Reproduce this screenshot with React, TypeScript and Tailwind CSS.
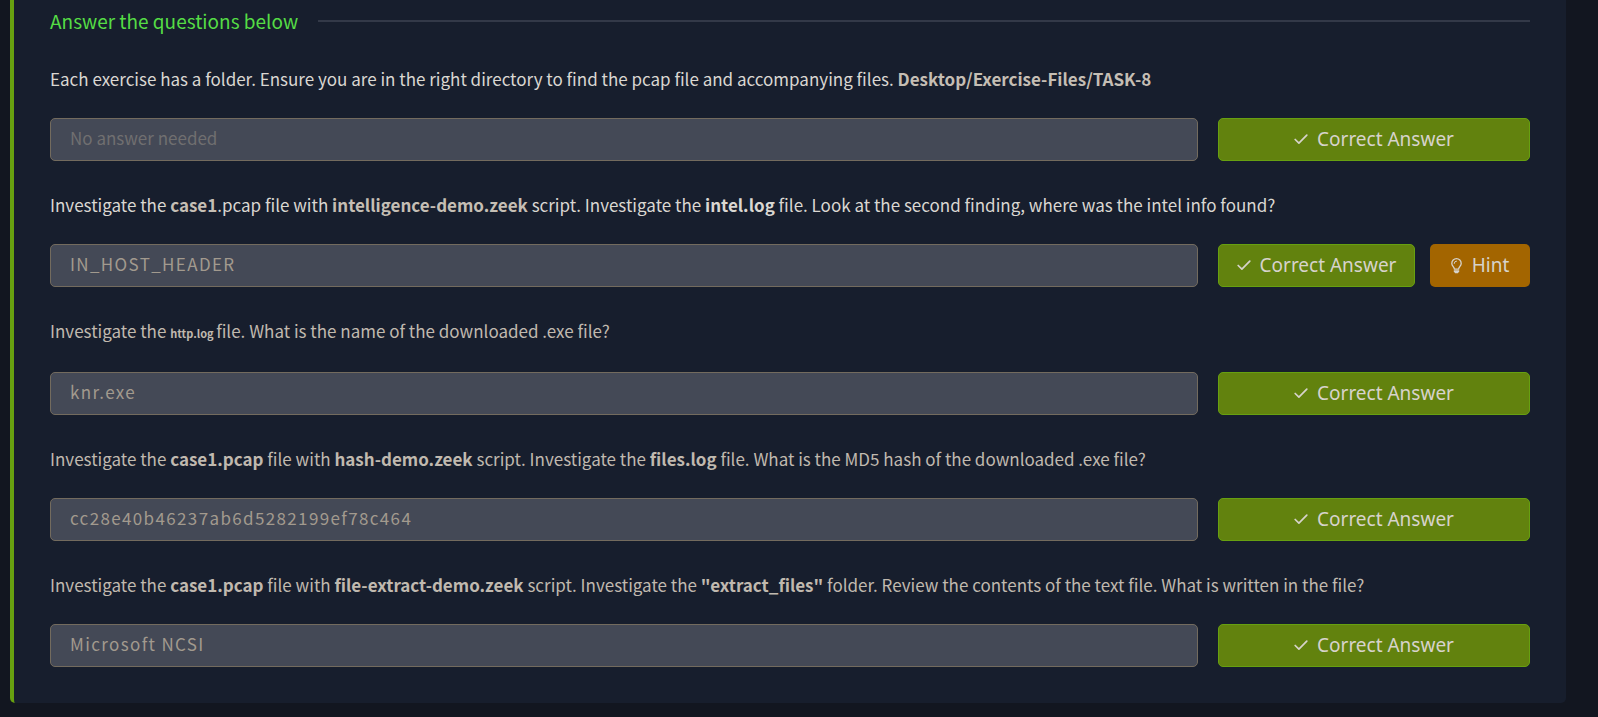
import { useId, type ReactNode } from "react";

type Question = {
  text: ReactNode;
  answer?: string;
  bright?: boolean;
  hint?: boolean;
};

const questions: Question[] = [
  {
    text: (
      <>
        Each exercise has a folder. Ensure you are in the right directory to find the pcap file and
        accompanying files. <b className="text-[#c5beb4]">Desktop/Exercise-Files/TASK-8</b>
      </>
    ),
    bright: true,
  },
  {
    text: (
      <>
        Investigate the <b className="text-[#c5beb4]">case1</b>.pcap file with{" "}
        <b className="text-[#c5beb4]">intelligence-demo.zeek</b> script. Investigate the{" "}
        <b>intel.log</b> file. Look at the second finding, where was the intel info found?
      </>
    ),
    answer: "IN_HOST_HEADER",
    bright: true,
    hint: true,
  },
  {
    text: (
      <>
        Investigate the <b className="text-[11px] leading-[27px]">http.log </b>file. What is the
        name of the downloaded .exe file?
      </>
    ),
    answer: "knr.exe",
  },
  {
    text: (
      <>
        Investigate the <b>case1.pcap</b> file with <b>hash-demo.zeek</b> script. Investigate the{" "}
        <b>files.log</b> file. What is the MD5 hash of the downloaded .exe file?
      </>
    ),
    answer: "cc28e40b46237ab6d5282199ef78c464",
  },
  {
    text: (
      <>
        Investigate the <b>case1.pcap</b> file with <b>file-extract-demo.zeek</b> script.
        Investigate the <b>"extract_files"</b> folder. Review the contents of the text file. What is
        written in the file?
      </>
    ),
    answer: "Microsoft NCSI",
  },
];

function CheckIcon() {
  return (
    <svg aria-hidden="true" viewBox="0 0 14 14" className="size-[14px]" fill="none">
      <path
        d="M1.2 6.500 4.900 10.100 12.800 2.100"
        stroke="currentColor"
        strokeWidth="1.700"
        strokeLinecap="round"
        strokeLinejoin="round"
      />
    </svg>
  );
}

function BulbIcon() {
  return (
    <svg aria-hidden="true" viewBox="0 0 11 16" className="h-4 w-[11px]" fill="none">
      <path
        d="M3.400 11.200C3.400 9.100.8 8.100.8 5.400A4.700 4.700 0 0 1 10.200 5.400C10.200 8.100 7.600 9.100 7.600 11.200Z"
        stroke="currentColor"
        strokeWidth="1.300"
        strokeLinejoin="round"
      />
      <path d="M3.200 5.400A2.300 2.300 0 0 1 5.500 3.100" stroke="currentColor" strokeLinecap="round" />
      <path d="M2.800 12.300H8.200V13.600L6.900 15.300H4.100L2.800 13.600Z" fill="currentColor" />
    </svg>
  );
}

function QuestionRow({ text, answer, bright, hint }: Question) {
  const id = useId();
  return (
    <li className="flex flex-col gap-[25px]">
      <label
        htmlFor={id}
        className={
          bright
            ? "text-[17px] leading-[29px] text-[#dad7d2]"
            : "text-[17px] leading-[29px] text-[#c0b9af]"
        }
      >
        {text}
      </label>
      <div className="flex gap-5">
        <input
          id={id}
          type="text"
          disabled
          defaultValue={answer}
          placeholder="No answer needed"
          className={
            answer
              ? "h-[43px] min-w-0 flex-1 rounded-[5px] border border-[#736b5e] bg-[#444956] px-[19px] pb-1 text-[17px] tracking-[0.08em] text-[#a29a8e]"
              : "h-[43px] min-w-0 flex-1 rounded-[5px] border border-[#736b5e] bg-[#444956] px-[19px] pb-1 text-[17px] placeholder:text-[#706f70]"
          }
        />
        <div className="flex w-78 gap-[15px] font-['Noto_Sans',sans-serif] text-[19px] text-[#d7d3cb]">
          <button
            type="button"
            className="flex h-[43px] flex-1 items-center justify-center gap-[9px] rounded-[5px] border border-[#67a010] bg-[#62820e] whitespace-nowrap"
          >
            <CheckIcon />
            Correct Answer
          </button>
          {hint && (
            <button
              type="button"
              className="flex h-[43px] w-25 items-center justify-center gap-[10px] rounded-[5px] bg-[#a36500]"
            >
              <BulbIcon />
              Hint
            </button>
          )}
        </div>
      </div>
    </li>
  );
}

export default function App() {
  return (
    <main className="min-h-screen bg-[#121620] pr-8 pb-[14px] pl-[10px] font-['Noto_Sans_CJK_SC',sans-serif]">
      <section className="rounded-b-[5px] border-l-4 border-[#67a010] bg-[#171e2d] pt-1 pr-9 pb-9 pl-9">
        <header className="flex items-center gap-5">
          <h2 className="text-[19px] leading-[34px] text-[#55dc45]">Answer the questions below</h2>
          <div className="h-[2px] flex-1 bg-[#333948]" />
        </header>
        <ol className="mt-[26px] flex flex-col gap-[29px]">
          {questions.map((question, index) => (
            <QuestionRow key={index} {...question} />
          ))}
        </ol>
      </section>
    </main>
  );
}
